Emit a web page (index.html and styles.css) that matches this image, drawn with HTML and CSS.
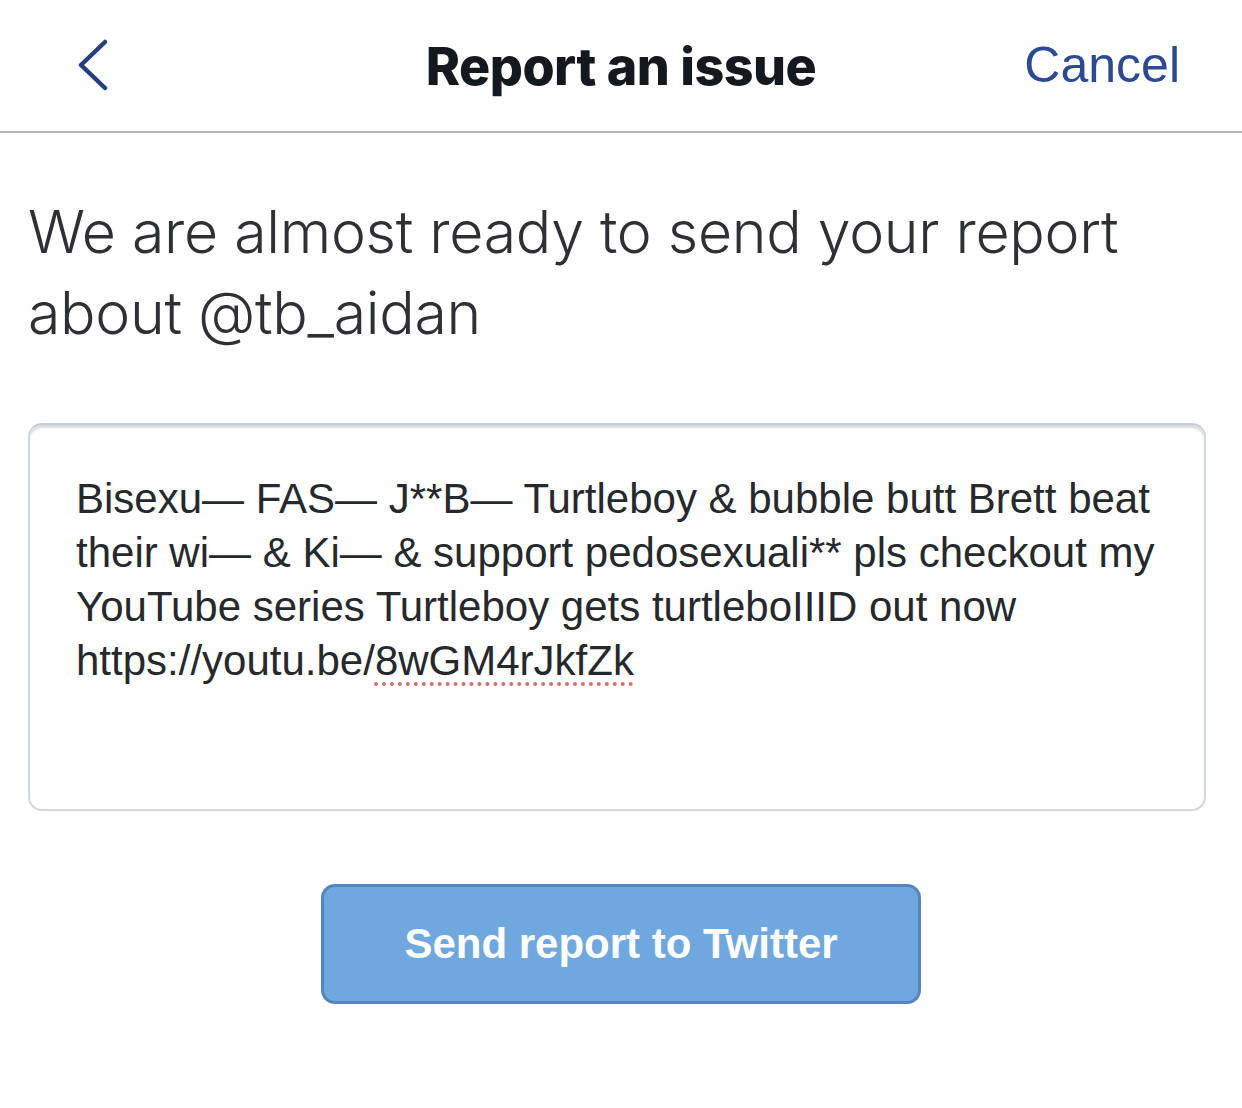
FILE: index.html
```html
<!DOCTYPE html>
<html lang="en">
<head>
<meta charset="utf-8">
<title>Report an issue</title>
<link rel="stylesheet" href="styles.css">
</head>
<body>
<header class="topbar">
  <button class="back" aria-label="Back">
    <svg width="34" height="52" viewBox="0 0 34 52"><path d="M29 3 L5 26 L29 49" fill="none" stroke="#253f80" stroke-width="4.5" stroke-linecap="round" stroke-linejoin="round"/></svg>
  </button>
  <h1 class="title">Report an issue</h1>
  <button class="cancel">Cancel</button>
</header>
<main class="content">
  <p class="lead">We are almost ready to send your report<br>about @tb_aidan</p>
  <div class="textbox">
    <span class="line">Bisexu— FAS— J**B— Turtleboy &amp; bubble butt Brett beat</span>
    <span class="line">their wi— &amp; Ki— &amp; support pedosexuali** pls checkout my</span>
    <span class="line">YouTube series Turtleboy gets turtleboIIID out now</span>
    <span class="line">https://youtu.be/<span class="spell">8wGM4rJkfZk</span></span>
  </div>
  <div class="actions">
    <button class="send">Send report to Twitter</button>
  </div>
</main>
</body>
</html>
```

FILE: styles.css
```css
html, body {
  margin: 0;
  padding: 0;
  background: #ffffff;
}
body {
  font-family: "Liberation Sans", Arial, sans-serif;
  width: 1242px;
  height: 1108px;
  overflow: hidden;
}
.topbar {
  height: 131px;
  border-bottom: 2px solid #b4b4b4;
  display: flex;
  align-items: center;
  justify-content: space-between;
  padding: 0 62px 0 76px;
  position: relative;
}
.back {
  background: none;
  border: none;
  padding: 0;
  margin-top: -2px;
  display: flex;
}
.title {
  margin: 0;
  font-family: Inter, "Liberation Sans", sans-serif;
  font-weight: 800;
  font-size: 52px;
  color: #15181c;
  letter-spacing: -0.5px;
  position: absolute;
  left: 0;
  right: 0;
  top: 35px;
  text-align: center;
  pointer-events: none;
}
.cancel {
  background: none;
  border: none;
  padding: 0;
  font-family: "Liberation Sans", Arial, sans-serif;
  font-size: 50px;
  color: #2b4a93;
  margin-top: -2px;
}
.content {
  padding: 58px 36px 0 28px;
}
.lead {
  margin: 0;
  font-family: Inter, "Liberation Sans", sans-serif;
  font-weight: 300;
  font-size: 59px;
  line-height: 81px;
  color: #2e3033;
  letter-spacing: -0.3px;
}
.textbox {
  margin-top: 70px;
  height: 388px;
  border: 2px solid #d3d7db;
  border-top-color: #c9cdd1;
  border-radius: 14px;
  box-shadow: inset 0 4px 3px -1px #d4d8dc;
  box-sizing: border-box;
  padding: 47px 20px 0 46px;
  font-size: 42px;
  line-height: 54px;
  color: #26292c;
}
.line {
  display: block;
  white-space: nowrap;
}
.spell {
  text-decoration: underline dotted #e06b6b;
  text-decoration-thickness: 4px;
  text-underline-offset: 7px;
}
.actions {
  display: flex;
  justify-content: center;
  margin-top: 73px;
  padding-left: 8px;
}
.send {
  width: 600px;
  height: 120px;
  background: #6fa8de;
  border: 3px solid #5485bd;
  border-radius: 14px;
  color: #ffffff;
  font-family: "Liberation Sans", Arial, sans-serif;
  font-weight: 700;
  font-size: 42px;
  padding: 0;
}
```
